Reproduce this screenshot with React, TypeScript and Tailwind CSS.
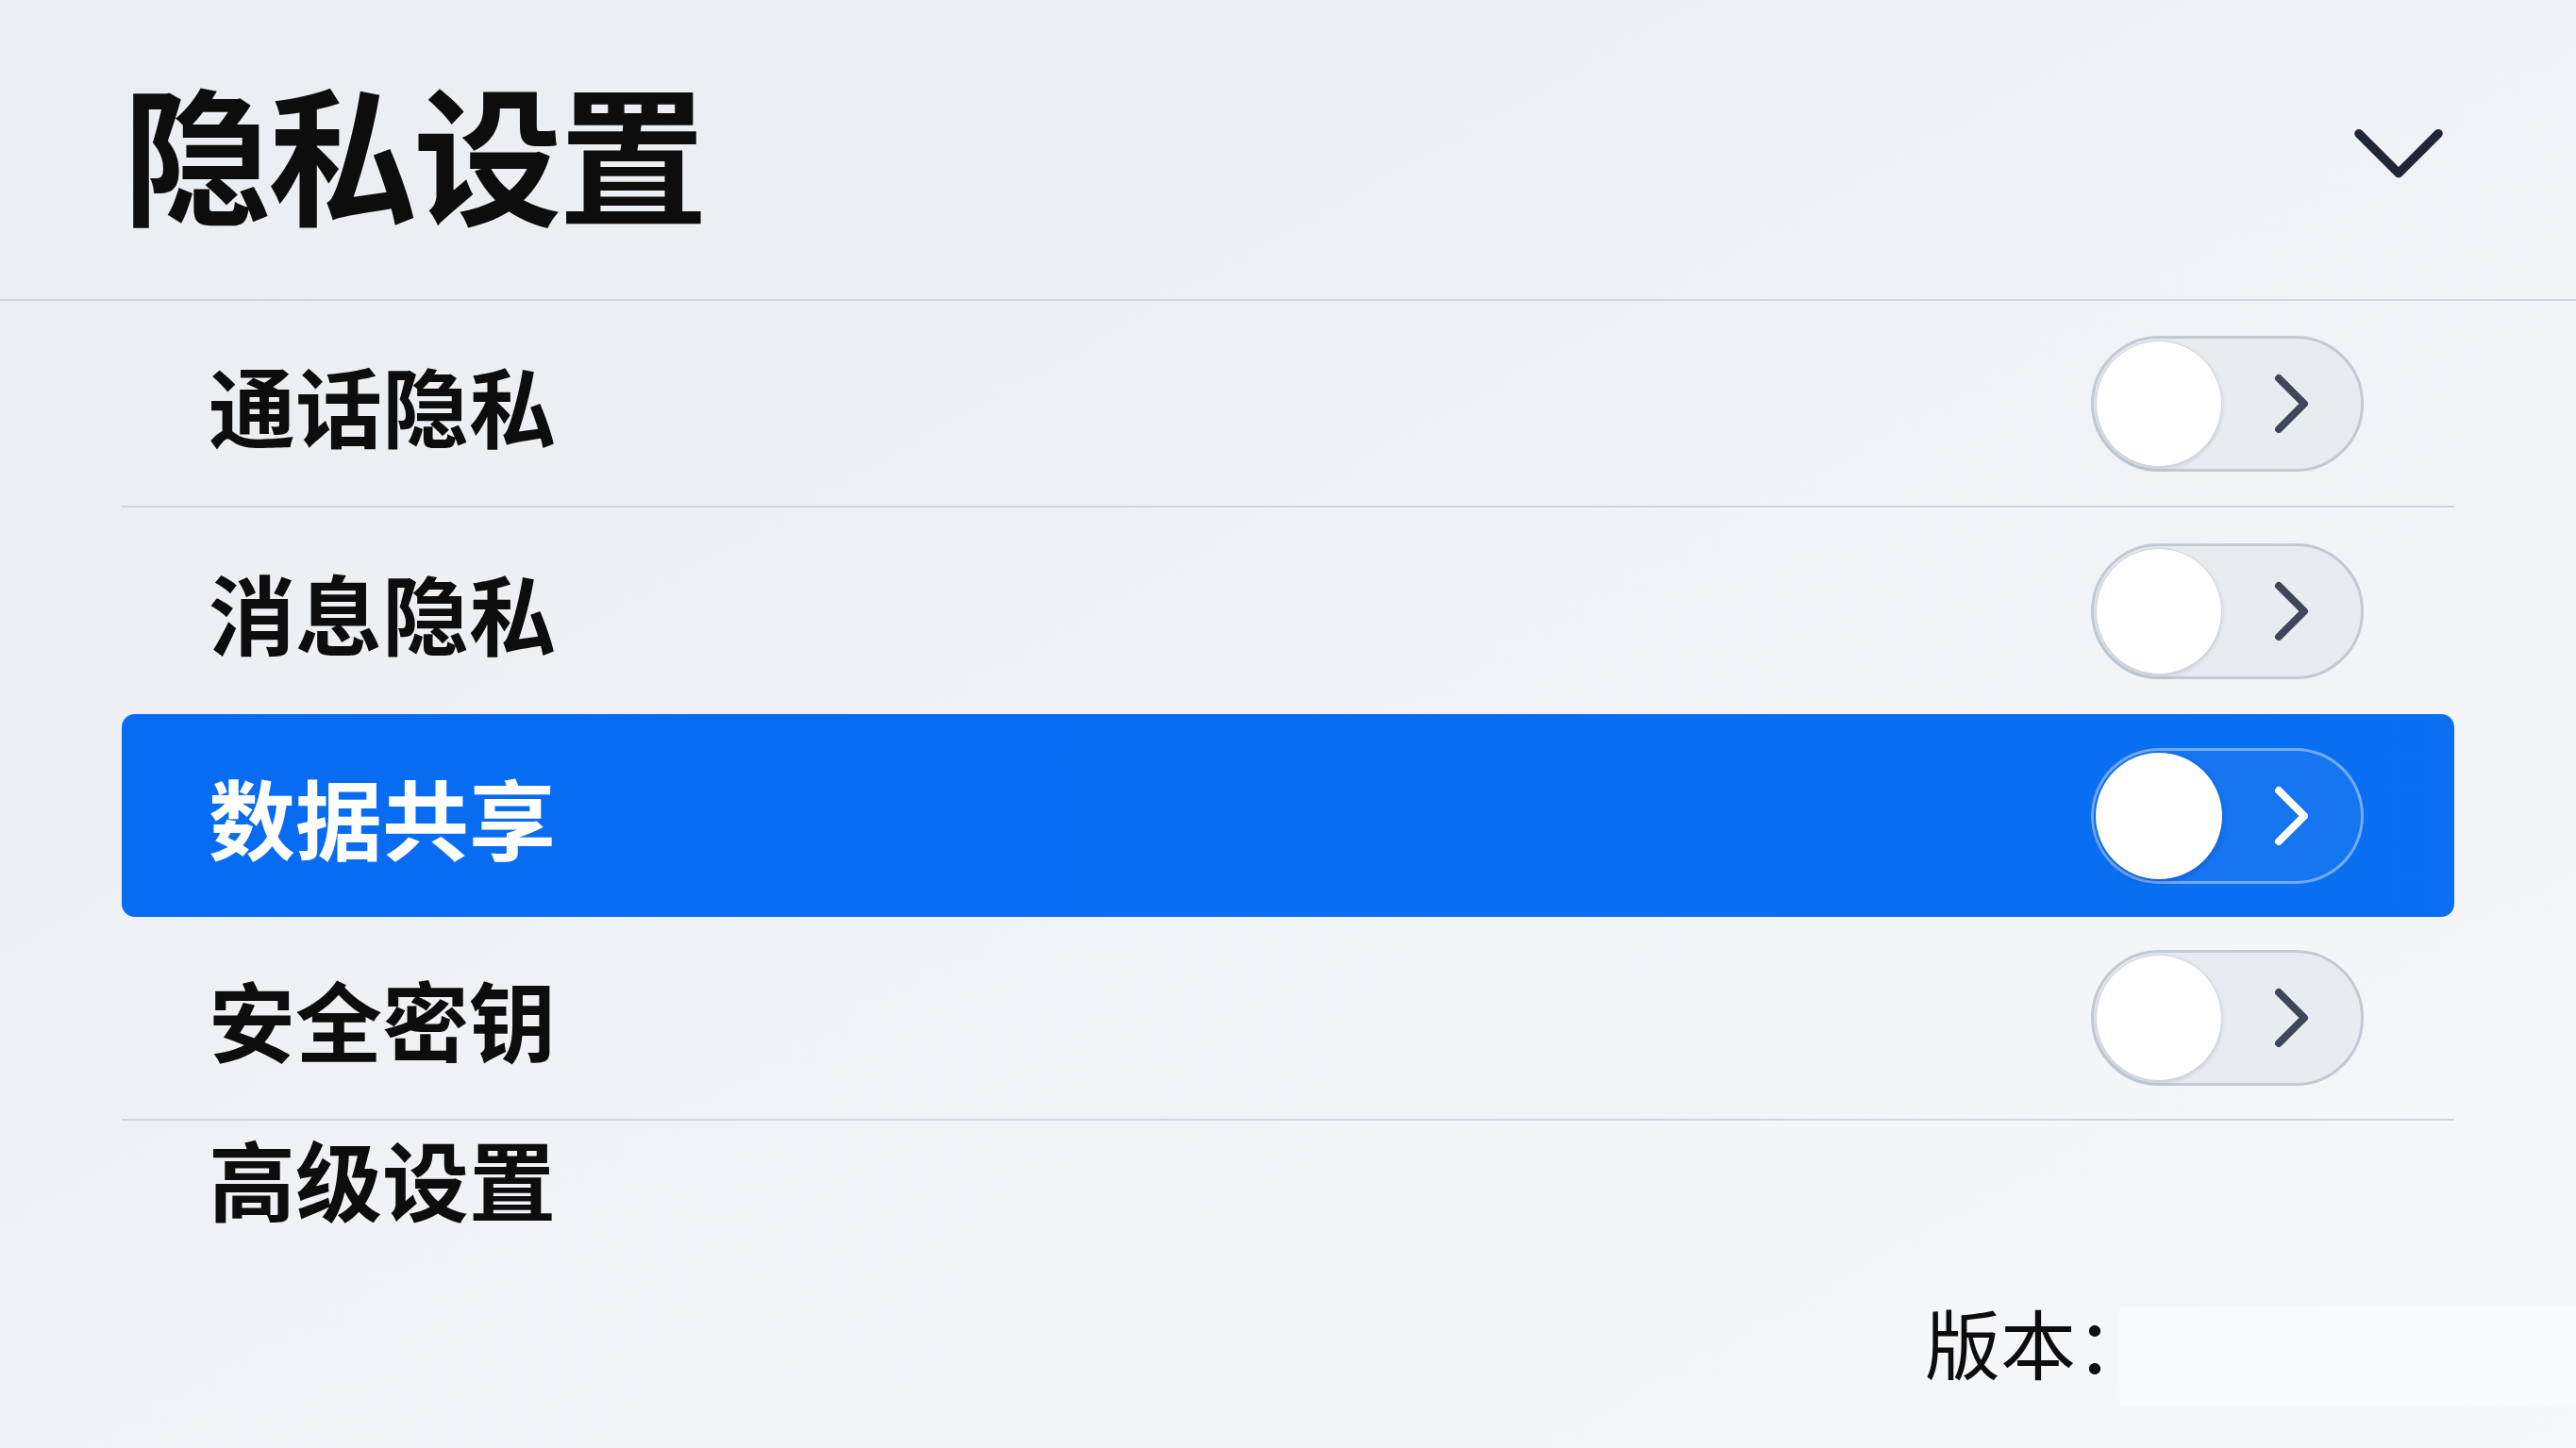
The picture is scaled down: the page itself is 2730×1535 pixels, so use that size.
import React from "react";

type Row = { label: string; height: string; active?: boolean; divider?: boolean };

const rows: Row[] = [
  { label: "通话隐私", height: "h-[219px]", divider: true },
  { label: "消息隐私", height: "h-[219px]" },
  { label: "数据共享", height: "h-[215px]", active: true },
  { label: "安全密钥", height: "h-[216px]", divider: true },
];

function ChevronRight({ className }: { className?: string }) {
  return (
    <svg viewBox="0 0 40 66" className={className} fill="none">
      <path d="M6 6 L33 33 L6 60" stroke="currentColor" strokeWidth="8" strokeLinecap="round" strokeLinejoin="round" />
    </svg>
  );
}

function Toggle({ active }: { active?: boolean }) {
  return (
    <div
      className={`flex h-[144px] w-[289px] items-center rounded-full border-[3px] pl-[2px] ${
        active ? "border-white/40 bg-white/5" : "border-[#c4cad3] bg-[#e8ebf0]"
      }`}
    >
      <div
        className={`h-[134px] w-[134px] rounded-full bg-white ${
          active ? "shadow-[0_2px_6px_rgba(0,40,120,0.35)]" : "border border-[#cfd4db] shadow-[0_2px_4px_rgba(60,70,90,0.18)]"
        }`}
      />
      <div className="flex flex-1 justify-center">
        <ChevronRight className={`h-[66px] w-[40px] ${active ? "text-white" : "text-[#3d4759]"}`} />
      </div>
    </div>
  );
}

export default function App() {
  return (
    <div className="flex min-h-screen w-full flex-col bg-gradient-to-br from-[#eaedf1] via-[#f0f2f5] to-[#f7f8fa] font-['Noto_Sans_CJK_SC','Noto_Sans',sans-serif] text-[#0d0d0d]">
      {/* Header */}
      <header className="flex h-[319px] items-center justify-between border-b-2 border-[#d2d6dc] pl-[130px] pr-[140px]">
        <h1 className="text-[158px] font-bold leading-none tracking-[-4px]">隐私设置</h1>
        <svg viewBox="0 0 102 62" className="mt-[12px] h-[58px] w-[96px] text-[#1f2737]" fill="none">
          <path d="M6 6 L51 51 L96 6" stroke="currentColor" strokeWidth="10" strokeLinecap="round" strokeLinejoin="round" />
        </svg>
      </header>

      {/* Settings list */}
      <div className="mx-[129px] flex flex-col">
        {rows.map((r) => (
          <div
            key={r.label}
            className={`flex items-center justify-between pl-[92px] pr-[96px] ${r.height} ${
              r.active
                ? "rounded-[14px] bg-gradient-to-r from-[#086cf3] to-[#0a6ff0] text-white"
                : "text-[#0d0d0d]"
            } ${r.divider ? "border-b-2 border-[#d2d6dc]" : ""}`}
          >
            <span className="text-[92px] font-bold leading-none">{r.label}</span>
            <Toggle active={r.active} />
          </div>
        ))}
        <div className="pl-[92px] pt-[14px]">
          <span className="text-[92px] font-bold leading-none">高级设置</span>
        </div>
      </div>

      {/* Version */}
      <div className="mt-[57px] flex items-center justify-end">
        <span className="-mr-[34px] text-[80px] font-normal leading-none">版本：</span>
        <div className="mt-[34px] h-[105px] w-[484px] bg-[#f9fafb]" />
      </div>
    </div>
  );
}
